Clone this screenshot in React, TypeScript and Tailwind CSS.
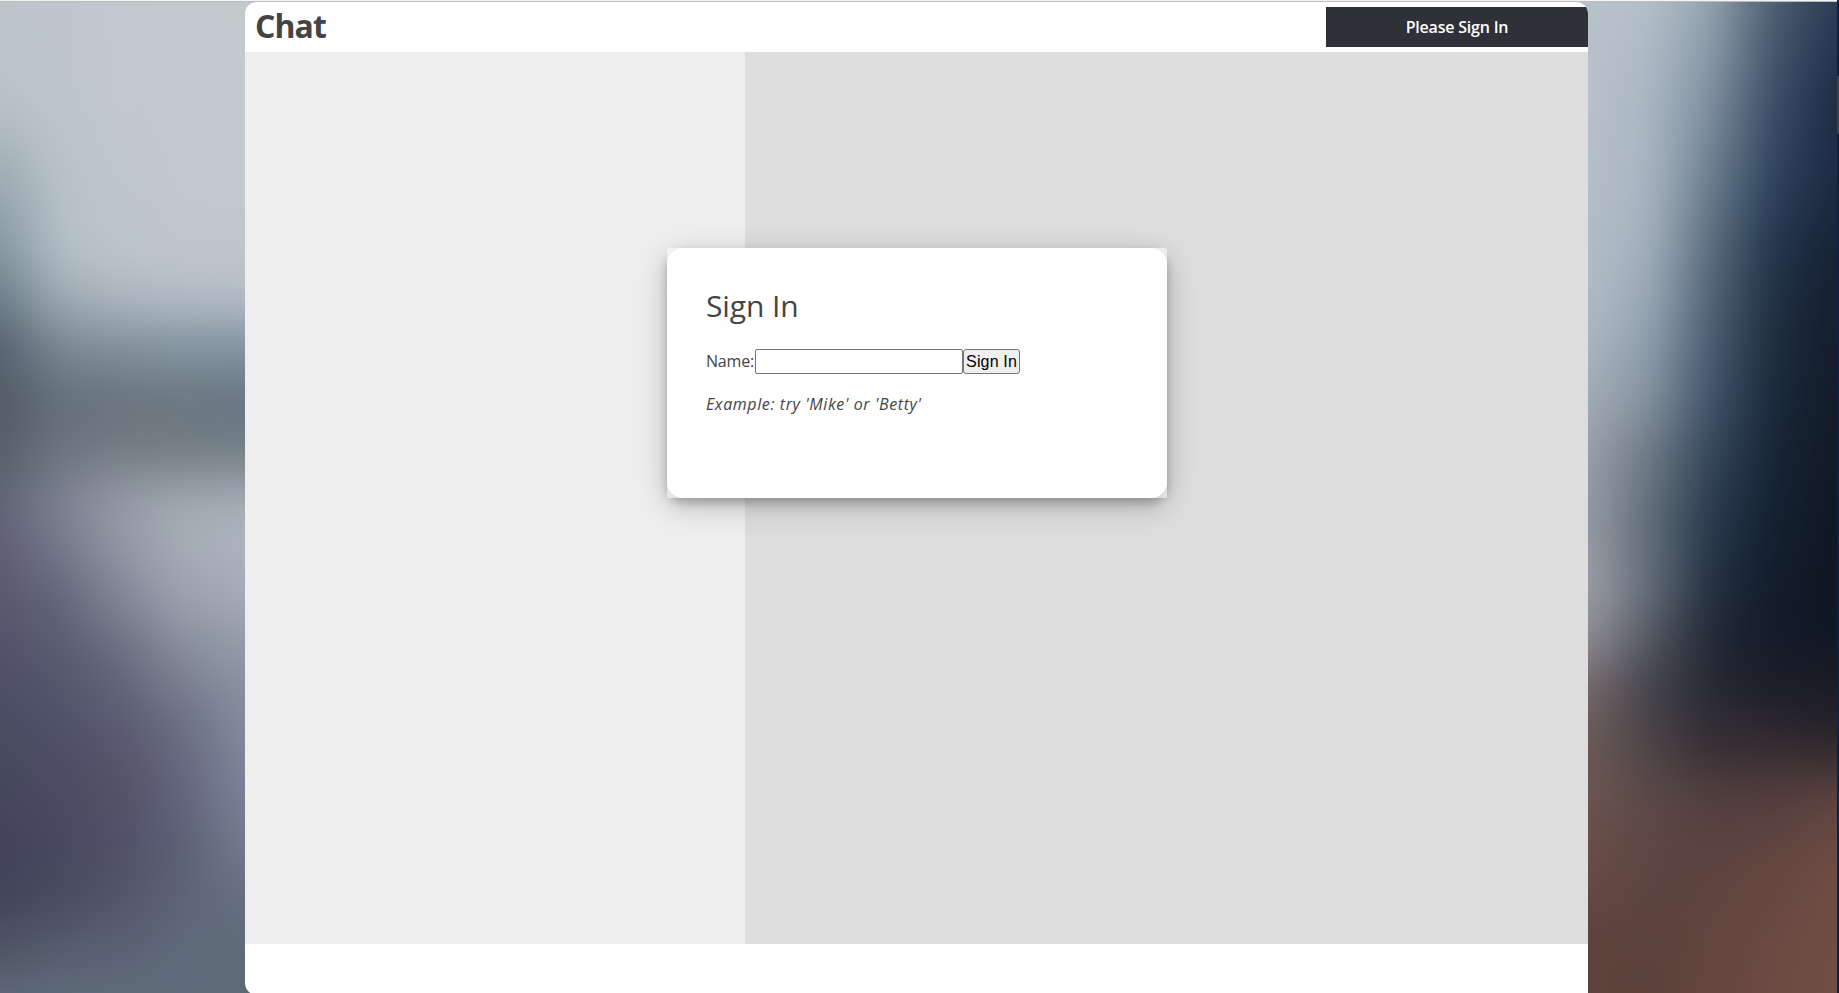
const leftX = [-60, 0, 60, 120, 180, 245, 310];
const leftRows: [number, string[]][] = [
  [0, ["#bdc5cb", "#c0c6ce", "#c3c8d0", "#c3c9cd", "#c4cacc"]],
  [100, ["#b9c2ca", "#bec6ce", "#c1c8d1", "#c3c7d1", "#c3c8cd"]],
  [180, ["#9caab2", "#b8c2ca", "#bfc7cf", "#c2c7d0", "#c3c7d1"]],
  [250, ["#84949d", "#b3bfc7", "#bdc5ce", "#c1c6cf", "#c1c6cf"]],
  [300, ["#6b7c87", "#9ea9b2", "#abb6bf", "#b0bac3", "#b3bcc6"]],
  [345, ["#56636f", "#7c8993", "#84919b", "#8696a1", "#8495a2"]],
  [400, ["#515b66", "#636f79", "#69747d", "#6b7780", "#677582"]],
  [450, ["#56606a", "#6b7480", "#757c85", "#737d85", "#737f87"]],
  [500, ["#5f6475", "#7d8390", "#939aa5", "#a0a8b1", "#a4acb6"]],
  [540, ["#605f75", "#767a8b", "#9499a6", "#a6aeb7", "#aeb5c0"]],
  [600, ["#58586d", "#626679", "#808594", "#9aa0ac", "#a4abb6"]],
  [660, ["#50516a", "#585a6f", "#666b7e", "#828896", "#9098a5"]],
  [720, ["#4a4c62", "#505269", "#5b5c73", "#6b7084", "#838c9d"]],
  [780, ["#46485d", "#4b4c63", "#545269", "#62657b", "#7d859a"]],
  [850, ["#41425a", "#47485f", "#505168", "#5b6075", "#727a8d"]],
  [900, ["#42455a", "#494d61", "#545668", "#5d6475", "#657080"]],
  [960, ["#515866", "#586171", "#5c6575", "#5f6b7a", "#606b79"]],
  [993, ["#5d6879", "#5f6a79", "#5f6a79", "#5f6a79", "#5d6877"]],
];
const rightX = [1528, 1588, 1650, 1710, 1770, 1837, 1900];
const rightRows: [number, string[]][] = [
  [0, ["#b9c2cb", "#b3bfc8", "#95a4b0", "#4e6173", "#283c54"]],
  [100, ["#b8c0cb", "#aab7c2", "#8090a0", "#3e5068", "#1c2b45"]],
  [180, ["#b5bfc9", "#a9b5c0", "#6b7f8e", "#30445e", "#1b2940"]],
  [250, ["#b2bdc7", "#a2afbb", "#5a6c7d", "#23374e", "#172134"]],
  [320, ["#aeb9c4", "#95a3b1", "#4d6075", "#203040", "#151c2e"]],
  [400, ["#a3adb8", "#83909d", "#41546b", "#1a2a3b", "#131a27"]],
  [460, ["#999fa9", "#6b7781", "#34455a", "#182537", "#111923"]],
  [520, ["#969ba4", "#5f6c78", "#293a4d", "#142131", "#101722"]],
  [590, ["#9c9fa8", "#626c77", "#243040", "#121c2c", "#101722"]],
  [640, ["#8f8c94", "#525660", "#222936", "#141b29", "#111824"]],
  [690, ["#73676a", "#43424a", "#282a34", "#1d1e28", "#1a1c25"]],
  [740, ["#6b5a57", "#4a4447", "#352e34", "#332b31", "#2a262b"]],
  [800, ["#6a5550", "#5b4947", "#523f40", "#533e3e", "#5f4440"]],
  [860, ["#6a4d46", "#5d4542", "#5d433f", "#62463f", "#6d4d44"]],
  [930, ["#5f443e", "#5d433e", "#61453f", "#6a4a42", "#704e45"]],
  [993, ["#5f433c", "#5b413b", "#64463f", "#6c4b43", "#714f46"]],
];

function Mesh({ id, xs, rows }: { id: string; xs: number[]; rows: [number, string[]][] }) {
  const top = -60;
  const height = 1113;
  const column = (i: number) => Math.min(4, Math.max(0, i - 1));
  return (
    <g filter="url(#soften)">
      <defs>
        {[0, 1, 2, 3, 4].map((c) => (
          <linearGradient key={c} id={`${id}${c}`} gradientUnits="userSpaceOnUse" x1="0" x2="0" y1="0" y2="993">
            {rows.map(([y, colors]) => (
              <stop key={y} offset={y / 993} stopColor={colors[c]} />
            ))}
          </linearGradient>
        ))}
      </defs>
      {xs.slice(0, -1).map((x, i) => (
        <g key={x}>
          <rect x={x} y={top} width={xs[i + 1] - x} height={height} fill={`url(#${id}${column(i)})`} />
          <rect x={x} y={top} width={xs[i + 1] - x} height={height} fill={`url(#${id}${column(i + 1)})`} mask="url(#fade)" />
        </g>
      ))}
    </g>
  );
}

function Backdrop() {
  return (
    <svg className="absolute inset-0" width="1839" height="993" viewBox="0 0 1839 993" aria-hidden="true">
      <defs>
        <linearGradient id="ramp">
          <stop offset="0" stopColor="#fff" stopOpacity="0" />
          <stop offset="1" stopColor="#fff" />
        </linearGradient>
        <mask id="fade" maskContentUnits="objectBoundingBox" x="0" y="0" width="1" height="1">
          <rect width="1" height="1" fill="url(#ramp)" />
        </mask>
        <filter id="soften" x="-0.2" y="-0.1" width="1.4" height="1.2" colorInterpolationFilters="sRGB">
          <feGaussianBlur stdDeviation="16" />
        </filter>
      </defs>
      <rect width="1839" height="993" fill="#bdc4cb" />
      <Mesh id="l" xs={leftX} rows={leftRows} />
      <Mesh id="r" xs={rightX} rows={rightRows} />
      <rect x="1837" width="2" height="993" fill="#0f2040" />
      <rect x="1837" y="76" width="2" height="58" fill="#39404f" />
      <rect width="1837" height="1" fill="#f3f4f2" />
      <rect y="1" width="1837" height="1" fill="#b9bfc0" />
    </svg>
  );
}

export default function App() {
  return (
    <div className="relative h-[993px] w-[1839px] overflow-hidden font-['Trebuchet_MS','Open_Sans',sans-serif] text-[#444]">
      <Backdrop />
      <main className="relative mt-[2px] ml-[245px] flex h-[993px] w-[1343px] flex-col overflow-hidden rounded-[12px] rounded-br-none bg-white">
        <header className="flex h-[50px] shrink-0 items-center justify-between pl-[10px]">
          <h1 className="-mt-[2px] text-[32px] leading-[46px] font-bold tracking-[-0.9px]">Chat</h1>
          <div className="flex h-10 w-[262px] items-center justify-center bg-[#2f3138] text-[16px] font-semibold tracking-[-0.2px] text-white">
            Please Sign In
          </div>
        </header>
        <div className="flex h-[892px] shrink-0">
          <div className="w-[500px] bg-[#eee]" />
          <div className="flex-1 bg-[#ddd]" />
        </div>
      </main>
      <section className="absolute top-[248px] left-[667px] h-[250px] w-[500px] rounded-[16px] shadow-[0_5px_10px_rgba(0,0,0,0.22),0_8px_30px_rgba(0,0,0,0.22)]">
        <div className="h-full rounded-[2px] bg-white/60">
          <div className="h-full rounded-[16px] bg-white px-[39px] pt-[38px]">
            <h2 className="text-[30px] leading-10 tracking-[-0.1px]">Sign In</h2>
            <form className="mt-[23px] flex h-[25px] items-center" onSubmit={(e) => e.preventDefault()}>
              <label htmlFor="name" className="w-[49px] text-[16px] leading-[25px] font-medium tracking-[-0.2px] whitespace-nowrap">Name:</label>
              <input id="name" className="h-[25px] w-[208px] rounded-[2px] border border-[#767676] bg-white px-1 text-black" />
              <button className="h-[25px] w-[57px] rounded-[3px] border border-[#767676] bg-[#efefef] font-['Liberation_Sans',Arial,sans-serif] text-[16px] leading-[23px] tracking-[0.15px] whitespace-nowrap text-black">
                Sign In
              </button>
            </form>
            <p className="mt-[18px] text-[16px] leading-6 font-medium tracking-[0.6px] italic">Example: try 'Mike' or 'Betty'</p>
          </div>
        </div>
      </section>
    </div>
  );
}
